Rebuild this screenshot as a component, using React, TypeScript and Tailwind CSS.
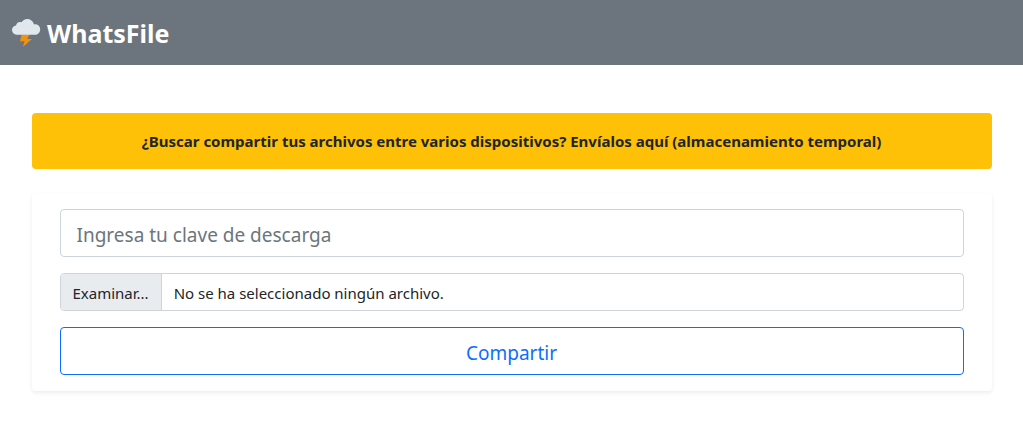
import { useState } from "react";

function StormIcon() {
  return (
    <svg viewBox="0 0 30 30" className="h-[30px] w-[30px] shrink-0" aria-hidden="true">
      <path d="M10.6 16.500h7.800l-2.100 4.600h4.700L11.800 29l1.800-5.700H9z" fill="#f4900c" />
      <path
        d="M24.4 6.200c-.5 0-1 .1-1.400.2C22 3 19.300 1 16.300 1c-2.500 0-4.600 1.300-5.700 3.200-.500-.200-1-.300-1.600-.300-2.100 0-3.800 1.600-4 3.700C2.700 7.900 1 9.800 1 12.100c0 2.700 2 4.700 4.600 4.700h18c3.200 0 5.600-2.300 5.600-5.300 0-3-2.100-5.300-4.800-5.300z"
        fill="#e1e8ed"
      />
    </svg>
  );
}

export default function App() {
  const [fileName, setFileName] = useState("");

  return (
    <div className="font-['Segoe_UI','Noto_Sans',sans-serif] text-[#212529]">
      <header className="flex h-[65px] items-center bg-[#6c757d] px-[11px]">
        <a href="#" className="flex items-center gap-[6px] text-[25px] leading-9 font-bold text-white">
          <StormIcon />
          WhatsFile
        </a>
      </header>

      <main className="mx-auto flex max-w-[960px] flex-col gap-6 pt-12 pb-8">
        <p className="rounded bg-[#ffc107] px-4 py-4 text-center text-[15px] leading-6 font-bold">
          ¿Buscar compartir tus archivos entre varios dispositivos? Envíalos aquí (almacenamiento temporal)
        </p>

        <form
          className="flex flex-col gap-4 rounded bg-white px-7 py-4 shadow-[0_2px_4px_rgba(0,0,0,0.075)]"
          onSubmit={(event) => event.preventDefault()}
        >
          <input
            type="text"
            aria-label="Ingresa tu clave de descarga"
            placeholder="Ingresa tu clave de descarga"
            className="h-12 w-full rounded border border-[#ced4da] px-4 pt-1 text-[19px] outline-none placeholder:text-[#6c757d] focus:border-[#86b7fe]"
          />

          <div>
            <input
              id="archivo"
              type="file"
              className="peer sr-only"
              onChange={(event) => setFileName(event.target.files?.[0]?.name ?? "")}
            />
            <label
              htmlFor="archivo"
              className="flex h-[38px] overflow-hidden rounded border border-[#ced4da] text-[15px] peer-focus-visible:border-[#86b7fe]"
            >
              <span className="flex items-center border-r border-[#ced4da] bg-[#e9ecef] px-3 pt-[2px]">
                Examinar...
              </span>
              <span className="flex items-center px-3 pt-[2px]">
                {fileName || "No se ha seleccionado ningún archivo."}
              </span>
            </label>
          </div>

          <button
            type="submit"
            className="h-12 w-full rounded border border-[#0d6efd] px-4 pt-1 text-[19px] text-[#0d6efd] hover:bg-[#0d6efd] hover:text-white"
          >
            Compartir
          </button>
        </form>
      </main>
    </div>
  );
}
